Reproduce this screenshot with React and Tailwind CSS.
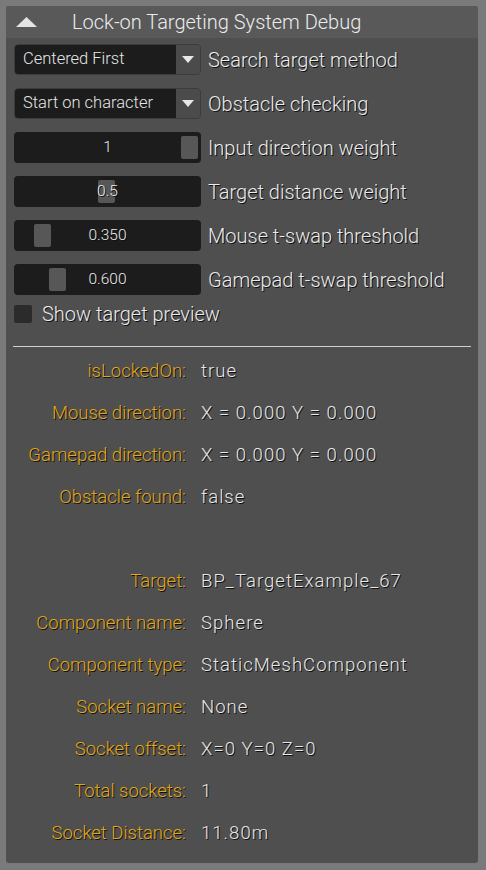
import React from "react";

const font = { fontFamily: "Roboto, 'Noto Sans', sans-serif" };

const shadow = "[text-shadow:1px_1px_0_#111]";

function Dropdown({ value, label }) {
  return (
    <div className="flex items-center h-[31px]">
      <div className="flex w-[187px] h-full rounded-[4px] border border-[#3c3c3c] overflow-hidden">
        <div className="flex-1 bg-[#1c1c1c] flex items-center pl-[8px] text-[16.5px] font-light text-[#e6e6e6]">{value}</div>
        <div className="w-[24px] bg-[#4b4b4b] flex items-center justify-center">
          <svg width="12" height="8" viewBox="0 0 12 8">
            <path d="M0 0 L12 0 L6 7 Z" fill="#e8e8e8" />
          </svg>
        </div>
      </div>
      <span className={`ml-[7px] text-[20px] font-light text-[#ececec] ${shadow}`}>{label}</span>
    </div>
  );
}

function Slider({ value, label, grab }) {
  return (
    <div className="flex items-center h-[31px]">
      <div className="relative w-[187px] h-full rounded-[4px] bg-[#1c1c1c] flex items-center justify-center">
        <div className={`absolute top-[4px] bottom-[4px] w-[17px] rounded-[2px] bg-[#575757] ${grab}`} />
        <span className={`relative text-[15.5px] font-light text-[#ececec] ${shadow}`}>{value}</span>
      </div>
      <span className={`ml-[7px] text-[20px] font-light text-[#ececec] ${shadow}`}>{label}</span>
    </div>
  );
}

const info1 = [
  ["isLockedOn:", "true"],
  ["Mouse direction:", "X = 0.000 Y = 0.000"],
  ["Gamepad direction:", "X = 0.000 Y = 0.000"],
  ["Obstacle found:", "false"],
];

const info2 = [
  ["Target:", "BP_TargetExample_67"],
  ["Component name:", "Sphere"],
  ["Component type:", "StaticMeshComponent"],
  ["Socket name:", "None"],
  ["Socket offset:", "X=0 Y=0 Z=0"],
  ["Total sockets:", "1"],
  ["Socket Distance:", "11.80m"],
];

function InfoRow({ label, value }) {
  return (
    <div className="flex items-center h-[42px]">
      <div className={`w-[180px] text-right text-[18.5px] font-light text-[#e4a815] ${shadow}`}>{label}</div>
      <div className={`ml-[15px] text-[18.5px] font-light tracking-[1.05px] text-[#e8e8e8] ${shadow}`}>{value}</div>
    </div>
  );
}

export default function App() {
  return (
    <div className="w-[486px] h-[870px] bg-[#7a7a7a] pt-[6px] pl-[6px]" style={font}>
      <div className="w-[472px] h-[857px] bg-[#4f4f4f] rounded-[3px] overflow-hidden flex flex-col">
        {/* titre */}
        <div className="h-[32px] bg-[#595959] flex items-center">
          <svg className="ml-[10px]" width="21" height="10" viewBox="0 0 21 10">
            <path d="M0 10 L10.5 0 L21 10 Z" fill="#e4e4e4" />
          </svg>
          <span className="ml-[35px] text-[20px] font-light text-[#ececec]">Lock-on Targeting System Debug</span>
        </div>

        <div className="pl-[8px] pr-[7px] pt-[6px] flex flex-col gap-[13px]">
          <Dropdown value="Centered First" label="Search target method" />
          <Dropdown value="Start on character" label="Obstacle checking" />
          <Slider value="1" label="Input direction weight" grab="right-[3px]" />
          <Slider value="0.5" label="Target distance weight" grab="left-[84px]" />
          <Slider value="0.350" label="Mouse t-swap threshold" grab="left-[20px]" />
          <Slider value="0.600" label="Gamepad t-swap threshold" grab="left-[35px]" />
        </div>

        <div className="pl-[8px] mt-[9px] flex items-center h-[19px]">
          <div className="w-[18px] h-[18px] rounded-[2px] bg-[#2b2b2b]" />
          <span className={`ml-[10px] text-[20px] font-light text-[#ececec] ${shadow}`}>Show target preview</span>
        </div>

        <div className="ml-[7px] mr-[7px] mt-[23px] h-px bg-[#cfcfcf]" />

        <div className="mt-[4px] flex flex-col">
          {info1.map(([l, v]) => (
            <InfoRow key={l} label={l} value={v} />
          ))}
          <div className="h-[42px]" />
          {info2.map(([l, v]) => (
            <InfoRow key={l} label={l} value={v} />
          ))}
        </div>
      </div>
    </div>
  );
}
